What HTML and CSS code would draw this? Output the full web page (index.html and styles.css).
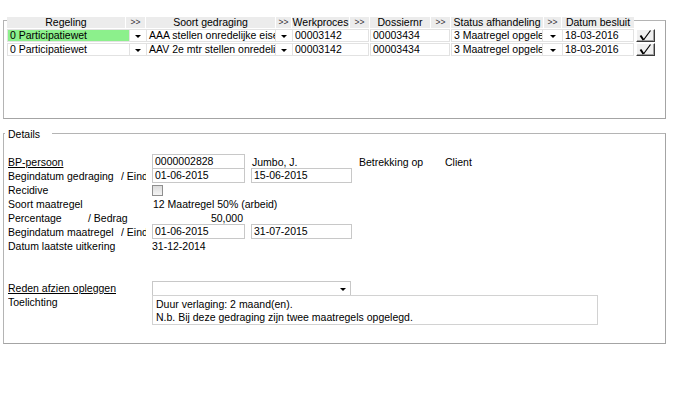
FILE: index.html
```html
<!DOCTYPE html>
<html>
<head>
<meta charset="utf-8">
<link rel="stylesheet" href="styles.css">
</head>
<body>
<div class="page">
  <div class="grid-box">
    <div class="grid-head">
      <div class="hc w-reg">Regeling</div><div class="hs w19">&gt;&gt;</div>
      <div class="hc w-soort">Soort gedraging</div><div class="hs w15">&gt;&gt;</div>
      <div class="hc w-werk">Werkproces</div><div class="hs w19">&gt;&gt;</div>
      <div class="hc w-dos">Dossiernr</div><div class="hs w19">&gt;&gt;</div>
      <div class="hc w-stat">Status afhandeling</div><div class="hs w17">&gt;&gt;</div>
      <div class="hc w-dat">Datum besluit</div>
    </div>
    <div class="grid-row">
      <div class="cell c-reg green">0 Participatiewet</div><div class="arr a-reg"><span class="tri"></span></div>
      <div class="cell c-soort">AAA stellen onredelijke eisen</div><div class="arr a-soort"><span class="tri"></span></div>
      <div class="cell c-werk">00003142</div>
      <div class="cell c-dos">00003434</div>
      <div class="cell c-stat">3 Maatregel opgelegd</div><div class="arr a-stat"><span class="tri"></span></div>
      <div class="cell c-dat">18-03-2016</div>
      <div class="chk"><svg width="13" height="11" viewBox="0 0 13 11"><path d="M1.5 5.5 L4.5 10" stroke="#000" stroke-width="2" fill="none"/><path d="M4.5 10 L11.5 0.5" stroke="#000" stroke-width="1.2" fill="none"/></svg></div>
    </div>
    <div class="grid-row">
      <div class="cell c-reg">0 Participatiewet</div><div class="arr a-reg"><span class="tri"></span></div>
      <div class="cell c-soort">AAV 2e mtr stellen onredelijke eisen</div><div class="arr a-soort"><span class="tri"></span></div>
      <div class="cell c-werk">00003142</div>
      <div class="cell c-dos">00003434</div>
      <div class="cell c-stat">3 Maatregel opgelegd</div><div class="arr a-stat"><span class="tri"></span></div>
      <div class="cell c-dat">18-03-2016</div>
      <div class="chk"><svg width="13" height="11" viewBox="0 0 13 11"><path d="M1.5 5.5 L4.5 10" stroke="#000" stroke-width="2" fill="none"/><path d="M4.5 10 L11.5 0.5" stroke="#000" stroke-width="1.2" fill="none"/></svg></div>
    </div>
  </div>

  <div class="details">
    <div class="legend">Details</div>
    <div class="drows">
      <div class="drow">
        <div class="lbl"><span class="u">BP-persoon</span></div>
        <div class="inp w93">0000002828</div>
        <div class="txt jumbo">Jumbo, J.</div>
        <div class="txt betr">Betrekking op</div>
        <div class="txt">Client</div>
      </div>
      <div class="drow">
        <div class="lbl"><span class="main m113">Begindatum gedraging</span><span class="sub">/ Einddatum</span></div>
        <div class="inp w93">01-06-2015</div>
        <div class="inp w101">15-06-2015</div>
      </div>
      <div class="drow">
        <div class="lbl">Recidive</div>
        <div class="cbox"></div>
      </div>
      <div class="drow">
        <div class="lbl">Soort maatregel</div>
        <div class="txt pl1">12 Maatregel 50% (arbeid)</div>
      </div>
      <div class="drow">
        <div class="lbl"><span class="main m80">Percentage</span><span class="sub2">/ Bedrag</span></div>
        <div class="txt amount">50,000</div>
      </div>
      <div class="drow">
        <div class="lbl"><span class="main m113">Begindatum maatregel</span><span class="sub">/ Einddatum</span></div>
        <div class="inp w93">01-06-2015</div>
        <div class="inp w101">31-07-2015</div>
      </div>
      <div class="drow">
        <div class="lbl">Datum laatste uitkering</div>
        <div class="txt">31-12-2014</div>
      </div>
      <div class="drow"></div>
      <div class="drow"></div>
      <div class="drow">
        <div class="lbl"><span class="u">Reden afzien opleggen</span></div>
        <div class="sel"><span class="tri"></span></div>
      </div>
      <div class="drow">
        <div class="lbl">Toelichting</div>
        <div class="area">Duur verlaging: 2 maand(en).<br>N.b. Bij deze gedraging zijn twee maatregels opgelegd.</div>
      </div>
    </div>
  </div>
</div>
</body>
</html>
```
FILE: styles.css
```css
body {
  margin: 0;
  background: #fff;
  color: #000;
  font-family: "Liberation Sans", Arial, sans-serif;
  font-size: 10.5px;
}
.page {
  padding: 20px 0 0 3px;
}
.grid-box {
  box-sizing: border-box;
  width: 663px;
  height: 99px;
  border: 1px solid #b4b4b4;
  border-right-color: #a4a4a4;
  border-bottom-color: #a4a4a4;
}
.grid-head {
  display: flex;
  gap: 1px;
  width: 627px;
  height: 11px;
  margin: -4px 0 0 3px;
  background: #fff;
  line-height: 11px;
}
.hc {
  background: #ececec;
  text-align: center;
  white-space: nowrap;
  overflow: hidden;
}
.hs {
  background: #ececec;
  text-align: center;
  font-size: 8.5px;
  color: #333;
}
.w-reg { width: 118px; }
.w-soort { width: 129px; }
.w-werk { width: 57px; }
.w-dos { width: 60px; }
.w-stat { width: 92px; }
.w-dat { width: 72px; }
.w19 { width: 19px; }
.w17 { width: 17px; }
.w15 { width: 15px; }

.grid-row {
  display: flex;
  height: 13px;
  margin: 1px 0 0 3px;
}
.cell {
  box-sizing: border-box;
  height: 13px;
  border: 1px solid #e2e2e2;
  padding-left: 2px;
  line-height: 11px;
  white-space: nowrap;
  overflow: hidden;
  background: #fff;
}
.cell.green { background: #8cf08c; border-color: #e2e2e2; }
.c-reg { width: 123px; }
.a-reg { width: 16px; }
.c-soort { width: 130px; }
.a-soort { width: 16px; }
.c-werk { width: 77px; margin-right: 1px; }
.c-dos { width: 80px; margin-right: 1px; }
.c-stat { width: 92px; }
.a-stat { width: 19px; }
.c-dat { width: 72px; }
.arr {
  box-sizing: border-box;
  height: 13px;
  display: flex;
  justify-content: center;
  align-items: flex-end;
  padding-bottom: 3px;
  border-top: 1px solid #e2e2e2;
  border-bottom: 1px solid #e2e2e2;
}
.tri {
  width: 0;
  height: 0;
  border-left: 3px solid transparent;
  border-right: 3px solid transparent;
  border-top: 3px solid #000;
}
.chk {
  box-sizing: border-box;
  width: 19px;
  height: 13px;
  margin-left: 2px;
  background: #f0f0f0;
  border: 1px solid #fff;
  border-right-color: #3a3a3a;
  border-bottom-color: #3a3a3a;
  box-shadow: inset -1px -1px 0 #a0a0a0;
  display: flex;
  justify-content: center;
  align-items: center;
}

.details {
  box-sizing: border-box;
  width: 663px;
  height: 211px;
  margin-top: 14px;
  border: 1px solid #b4b4b4;
  border-right-color: #a4a4a4;
  border-bottom-color: #a4a4a4;
}
.legend {
  width: 44px;
  height: 13px;
  margin: -6px 0 0 1px;
  padding-left: 3px;
  background: #fff;
  line-height: 13px;
}
.drows {
  margin-top: 14px;
  padding-left: 4px;
}
.drow {
  display: flex;
  height: 14px;
  line-height: 14px;
  white-space: nowrap;
}
.lbl {
  width: 144px;
  flex: none;
  display: flex;
  overflow: hidden;
}
.main { flex: none; }
.m113 { width: 113px; }
.m80 { width: 80px; }
.sub { width: 25px; overflow: hidden; }
.sub2 { width: 60px; }
.u { text-decoration: underline; }
.inp {
  box-sizing: border-box;
  height: 15px;
  margin-top: -1px;
  border: 1px solid #c8c8c8;
  padding-left: 2px;
  line-height: 13px;
  background: #fff;
  flex: none;
}
.w93 { width: 93px; }
.w101 { width: 101px; margin-left: 6px; }
.txt { flex: none; }
.jumbo { width: 107px; margin-left: 7px; }
.betr { width: 86px; }
.pl1 { padding-left: 1px; }
.amount { width: 91px; text-align: right; }
.cbox {
  box-sizing: border-box;
  width: 11px;
  height: 11px;
  margin-top: 2px;
  border: 1px solid #8f8f8f;
  background: linear-gradient(#dcdcdc, #f4f4f4);
}
.sel {
  box-sizing: border-box;
  width: 199px;
  height: 14px;
  border: 1px solid #c8c8c8;
  border-bottom: none;
  display: flex;
  justify-content: flex-end;
  align-items: flex-end;
  padding: 0 4px 4px 0;
}
.area {
  box-sizing: border-box;
  width: 446px;
  height: 30px;
  border: 1px solid #d2d2d2;
  padding: 2px 0 0 3px;
  line-height: 13px;
  white-space: nowrap;
}
```
